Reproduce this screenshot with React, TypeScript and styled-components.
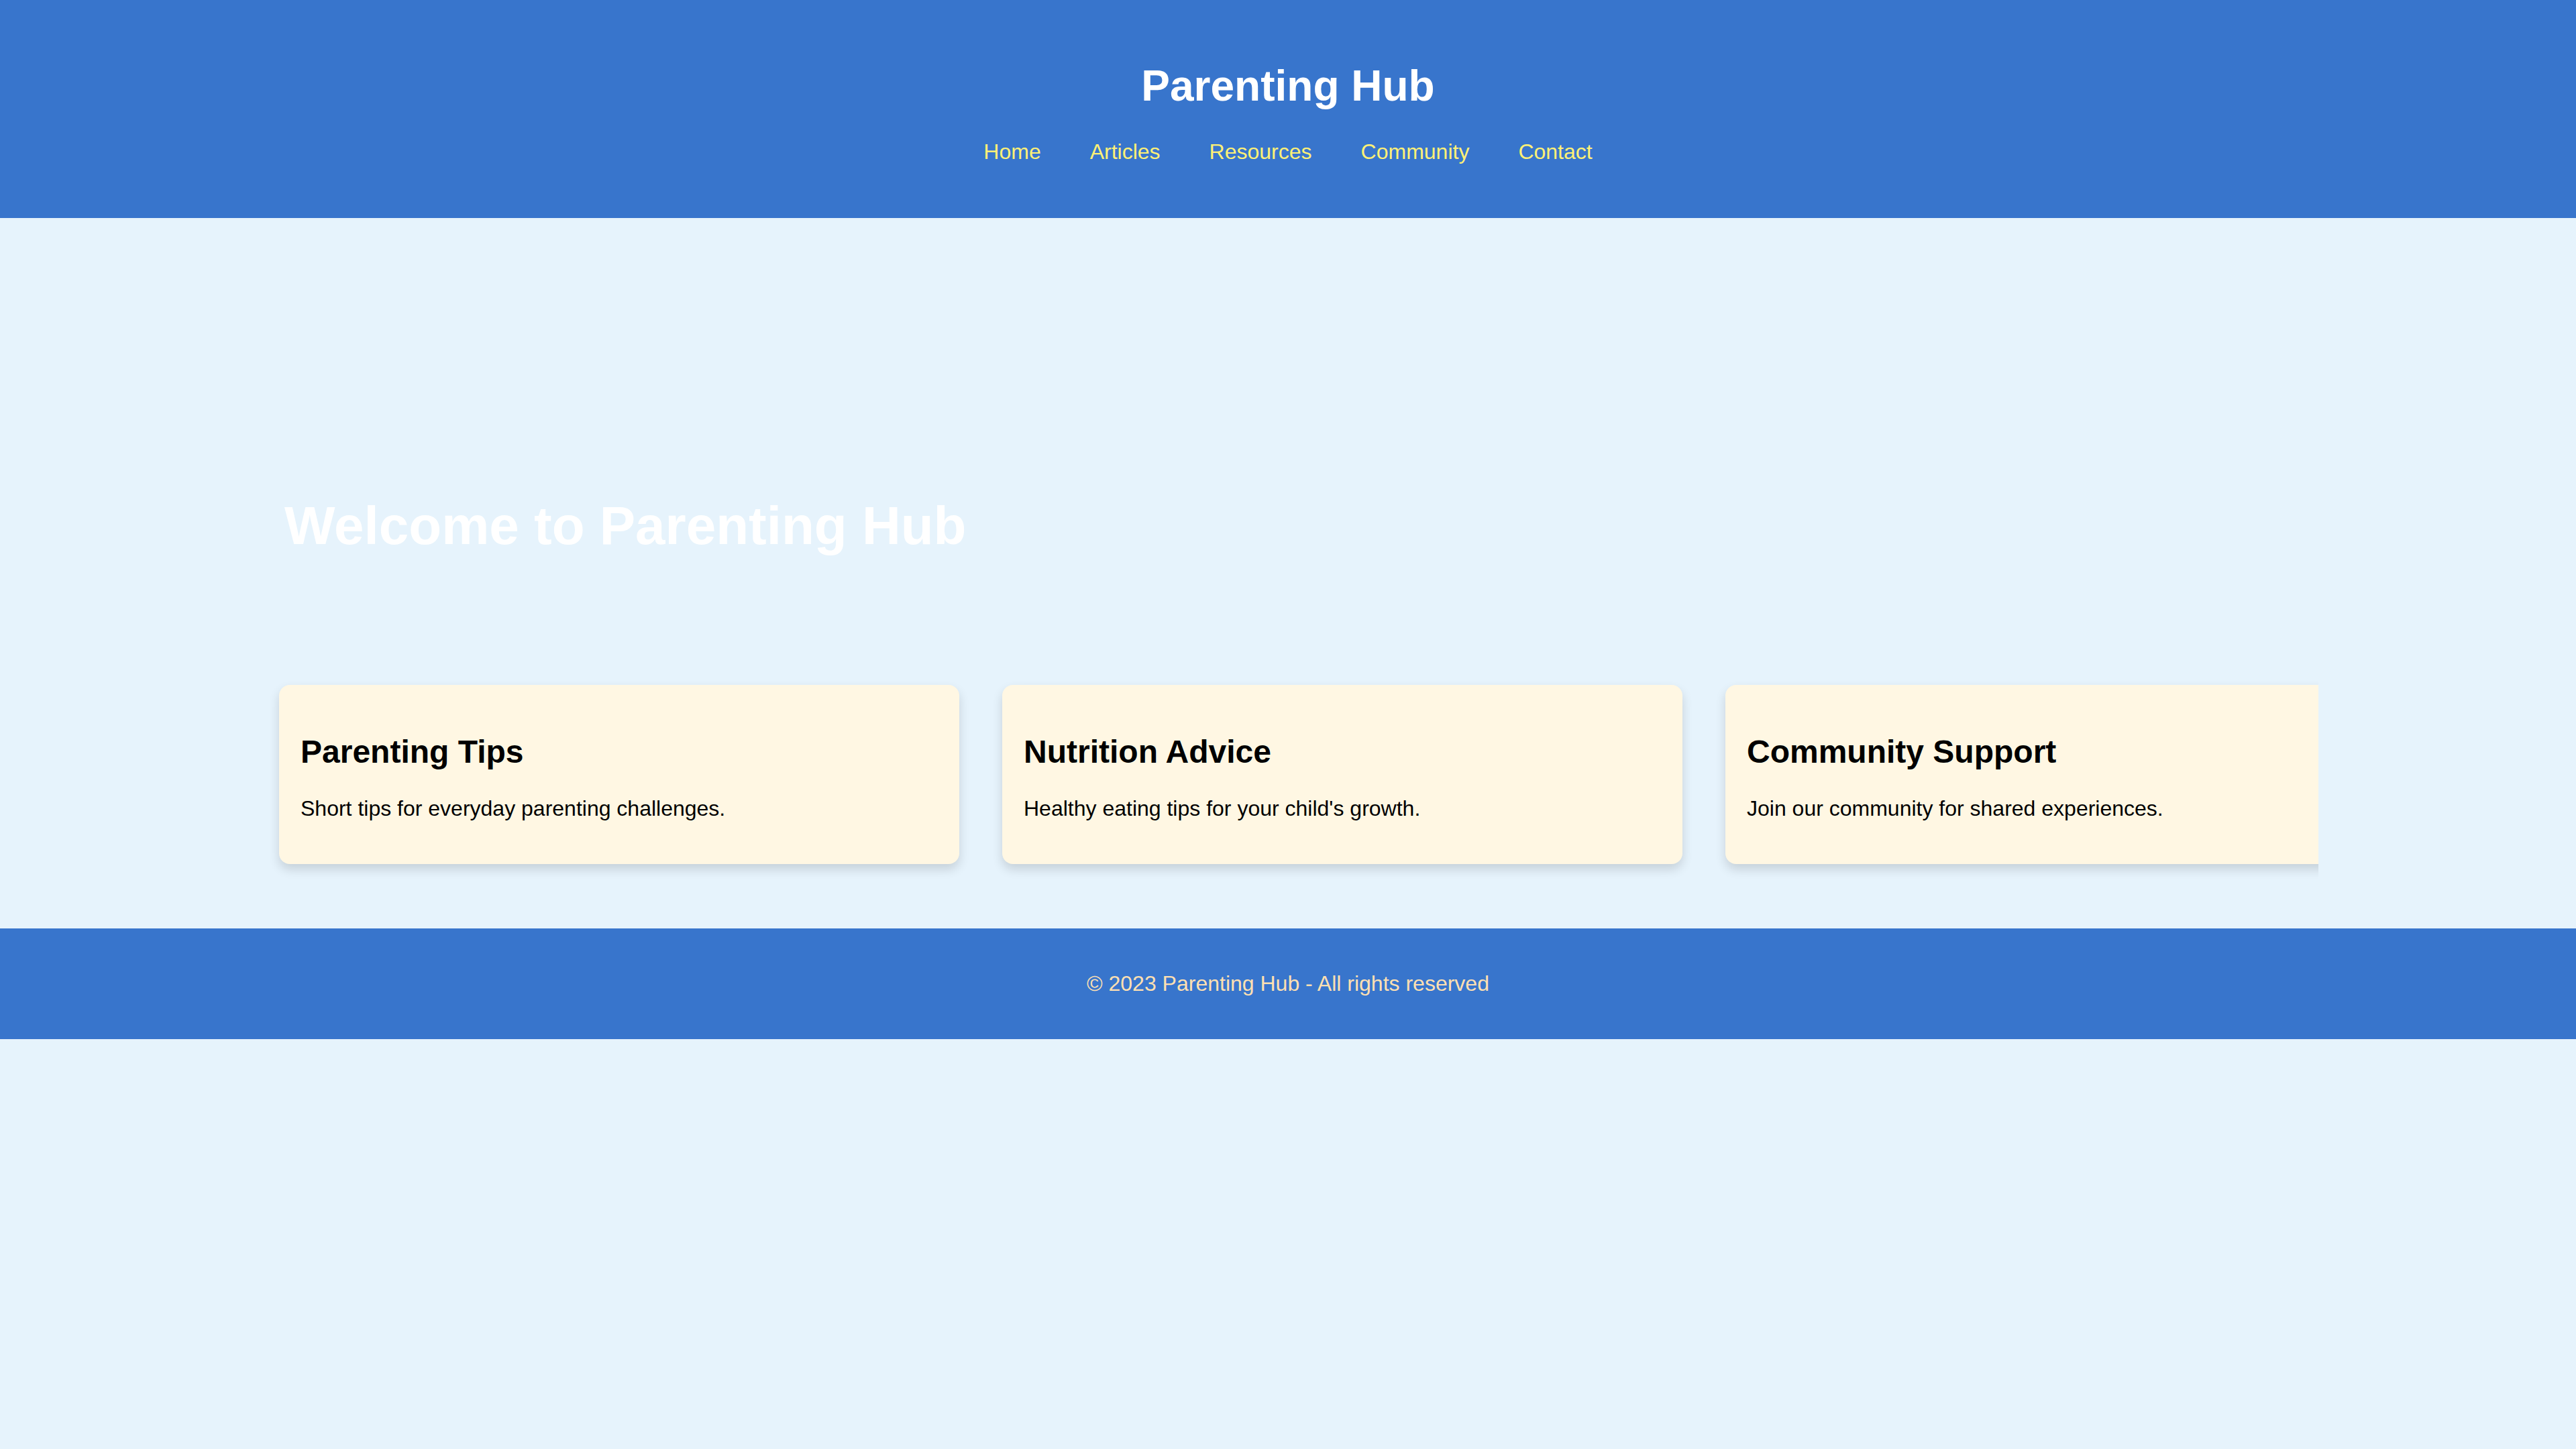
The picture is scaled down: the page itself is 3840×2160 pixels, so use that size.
import React from "react";
import styled, { createGlobalStyle } from "styled-components";

const GlobalStyle = createGlobalStyle`
  html, body {
    margin: 0;
    padding: 0;
    background: #e6f3fc;
    font-family: "Liberation Sans", Arial, Helvetica, sans-serif;
  }
  * { box-sizing: border-box; }
`;

const Header = styled.header`
  background: #3875cc;
  padding: 91px 0 80px;
  text-align: center;
`;

const SiteTitle = styled.h1`
  margin: 0 0 43px;
  font-size: 64px;
  font-weight: 700;
  line-height: normal;
  color: #ffffff;
`;

const Nav = styled.nav`
  display: flex;
  justify-content: center;
  gap: 73px;
`;

const NavLink = styled.a`
  font-size: 32px;
  line-height: normal;
  color: #fff176;
  text-decoration: none;
`;

const Main = styled.main`
  width: 3072px;
  margin: 0 auto;
  padding: 64px 0;
`;

const Hero = styled.section`
  height: 600px;
  padding: 349px 40px 0;
`;

const HeroTitle = styled.h2`
  margin: 0;
  font-size: 80px;
  font-weight: 700;
  line-height: normal;
  color: #ffffff;
`;

const CardRow = styled.div`
  display: flex;
  overflow: hidden;
`;

const Card = styled.article`
  flex: 0 0 1014px;
  margin: 32px;
  padding: 72px 32px 64px;
  background: #fff7e3;
  border-radius: 16px;
  box-shadow: 0 8px 16px rgba(0, 0, 0, 0.14);
`;

const CardTitle = styled.h3`
  margin: 0 0 39px;
  font-size: 48px;
  font-weight: 700;
  line-height: normal;
  color: #000000;
`;

const CardText = styled.p`
  margin: 0;
  font-size: 32px;
  line-height: normal;
  color: #000000;
`;

const Footer = styled.footer`
  background: #3875cc;
  padding: 64px 0;
  text-align: center;
`;

const FooterText = styled.p`
  margin: 0;
  font-size: 32px;
  line-height: normal;
  color: #ffe0b2;
`;

const links = ["Home", "Articles", "Resources", "Community", "Contact"];

const cards = [
  { title: "Parenting Tips", text: "Short tips for everyday parenting challenges." },
  { title: "Nutrition Advice", text: "Healthy eating tips for your child's growth." },
  { title: "Community Support", text: "Join our community for shared experiences." },
];

export default function App() {
  return (
    <>
      <GlobalStyle />
      <Header>
        <SiteTitle>Parenting Hub</SiteTitle>
        <Nav>
          {links.map((l) => (
            <NavLink key={l} href="#">
              {l}
            </NavLink>
          ))}
        </Nav>
      </Header>
      <Main>
        <Hero>
          <HeroTitle>Welcome to Parenting Hub</HeroTitle>
        </Hero>
        <CardRow>
          {cards.map((c) => (
            <Card key={c.title}>
              <CardTitle>{c.title}</CardTitle>
              <CardText>{c.text}</CardText>
            </Card>
          ))}
        </CardRow>
      </Main>
      <Footer>
        <FooterText>© 2023 Parenting Hub - All rights reserved</FooterText>
      </Footer>
    </>
  );
}
